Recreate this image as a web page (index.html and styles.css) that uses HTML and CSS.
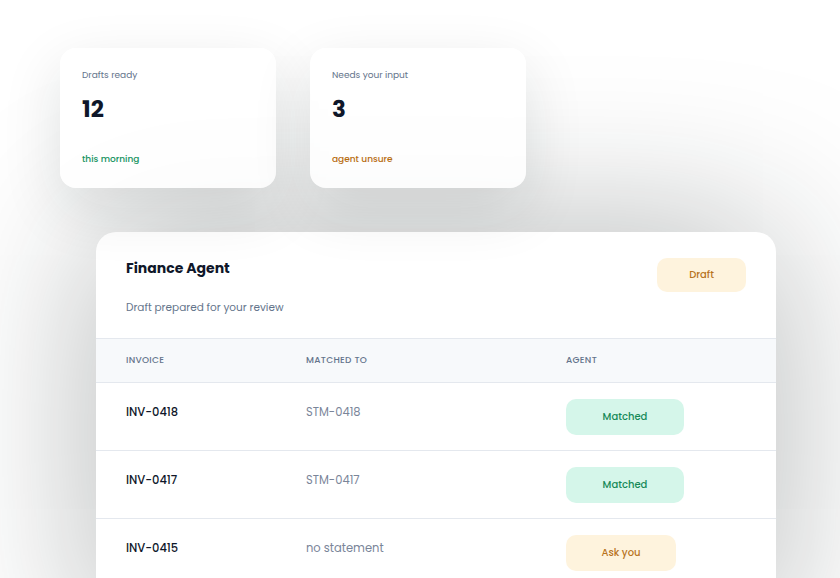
FILE: index.html
```html
<!DOCTYPE html>
<html>
<head>
<meta charset="utf-8">
<link rel="stylesheet" href="styles.css">
</head>
<body>
<div class="page">
  <div class="stats">
    <div class="stat">
      <div class="stat-label">Drafts ready</div>
      <div class="stat-value">12</div>
      <div class="stat-note green">this morning</div>
    </div>
    <div class="stat">
      <div class="stat-label">Needs your input</div>
      <div class="stat-value">3</div>
      <div class="stat-note amber">agent unsure</div>
    </div>
  </div>
  <div class="panel">
    <div class="panel-head">
      <div class="panel-titles">
        <div class="panel-title">Finance Agent</div>
        <div class="panel-sub">Draft prepared for your review</div>
      </div>
      <div class="badge badge-draft">Draft</div>
    </div>
    <div class="table">
      <div class="row row-head">
        <div class="c1">INVOICE</div>
        <div class="c2">MATCHED TO</div>
        <div class="c3">AGENT</div>
      </div>
      <div class="row">
        <div class="c1 inv">INV-0418</div>
        <div class="c2 ref">STM-0418</div>
        <div class="c3"><span class="badge badge-ok">Matched</span></div>
      </div>
      <div class="row">
        <div class="c1 inv">INV-0417</div>
        <div class="c2 ref">STM-0417</div>
        <div class="c3"><span class="badge badge-ok">Matched</span></div>
      </div>
      <div class="row">
        <div class="c1 inv">INV-0415</div>
        <div class="c2 ref">no statement</div>
        <div class="c3"><span class="badge badge-ask">Ask you</span></div>
      </div>
    </div>
  </div>
</div>
</body>
</html>
```
FILE: styles.css
```css
* { box-sizing: border-box; }
html, body { margin: 0; padding: 0; background: #ffffff; }
body {
  font-family: "Poppins", "Inter", "Noto Sans", sans-serif;
  color: #0f172a;
  overflow: hidden;
  width: 840px;
  height: 578px;
}
.page {
  padding: 48px 0 0 60px;
}
.stats {
  display: flex;
  gap: 34px;
  position: relative;
  z-index: 1;
}
.stat {
  width: 216px;
  height: 140px;
  background: rgba(255, 255, 255, 0.86);
  border-radius: 16px;
  box-shadow: 0 20px 60px rgba(20, 30, 30, 0.12);
  padding: 20px 22px;
  display: flex;
  flex-direction: column;
}
.stat-label {
  font-size: 9px;
  line-height: 14px;
  color: #64748b;
}
.stat-value {
  margin-top: 12px;
  font-size: 23px;
  line-height: 30px;
  font-weight: 700;
  color: #0f172a;
}
.stat-note {
  margin-top: auto;
  margin-bottom: 2px;
  font-size: 9px;
  line-height: 14px;
  font-weight: 500;
}
.green { color: #15935e; }
.amber { color: #b86e12; }

.panel {
  position: relative;
  margin: 44px 0 0 36px;
  width: 680px;
  height: 400px;
  background: #ffffff;
  border-radius: 20px 20px 0 0;
  box-shadow: 0 0 160px rgba(20, 30, 30, 0.34);
  overflow: hidden;
}
.panel-head {
  display: flex;
  justify-content: space-between;
  align-items: flex-start;
  padding: 26px 30px 0 30px;
  height: 107px;
  border-bottom: 1px solid #e4e8ee;
}
.panel-title {
  font-size: 14px;
  line-height: 20px;
  font-weight: 700;
  color: #0f172a;
}
.panel-sub {
  margin-top: 20px;
  font-size: 10.5px;
  line-height: 20px;
  color: #64748b;
}
.badge {
  display: inline-flex;
  align-items: center;
  justify-content: center;
  border-radius: 10px;
  font-size: 10px;
  font-weight: 500;
}
.badge-draft {
  width: 89px;
  height: 34px;
  background: #fef3dd;
  color: #b8741e;
}
.badge-ok {
  width: 118px;
  height: 36px;
  background: #d5f6ea;
  color: #168a58;
}
.badge-ask {
  width: 110px;
  height: 36px;
  background: #fef3dd;
  color: #b8741e;
}
.row {
  display: grid;
  grid-template-columns: 180px 260px 240px;
  align-items: center;
  height: 68px;
  border-bottom: 1px solid #e4e8ee;
}
.row > div { padding-left: 30px; }
.row-head {
  height: 44px;
  background: #f7f9fb;
  font-size: 9px;
  font-weight: 500;
  letter-spacing: 0.3px;
  color: #64748b;
}
.inv, .ref { padding-bottom: 8px; }
.inv {
  font-size: 11.5px;
  font-weight: 500;
  color: #0f172a;
}
.ref {
  font-size: 11.5px;
  color: #7a8599;
}
```
